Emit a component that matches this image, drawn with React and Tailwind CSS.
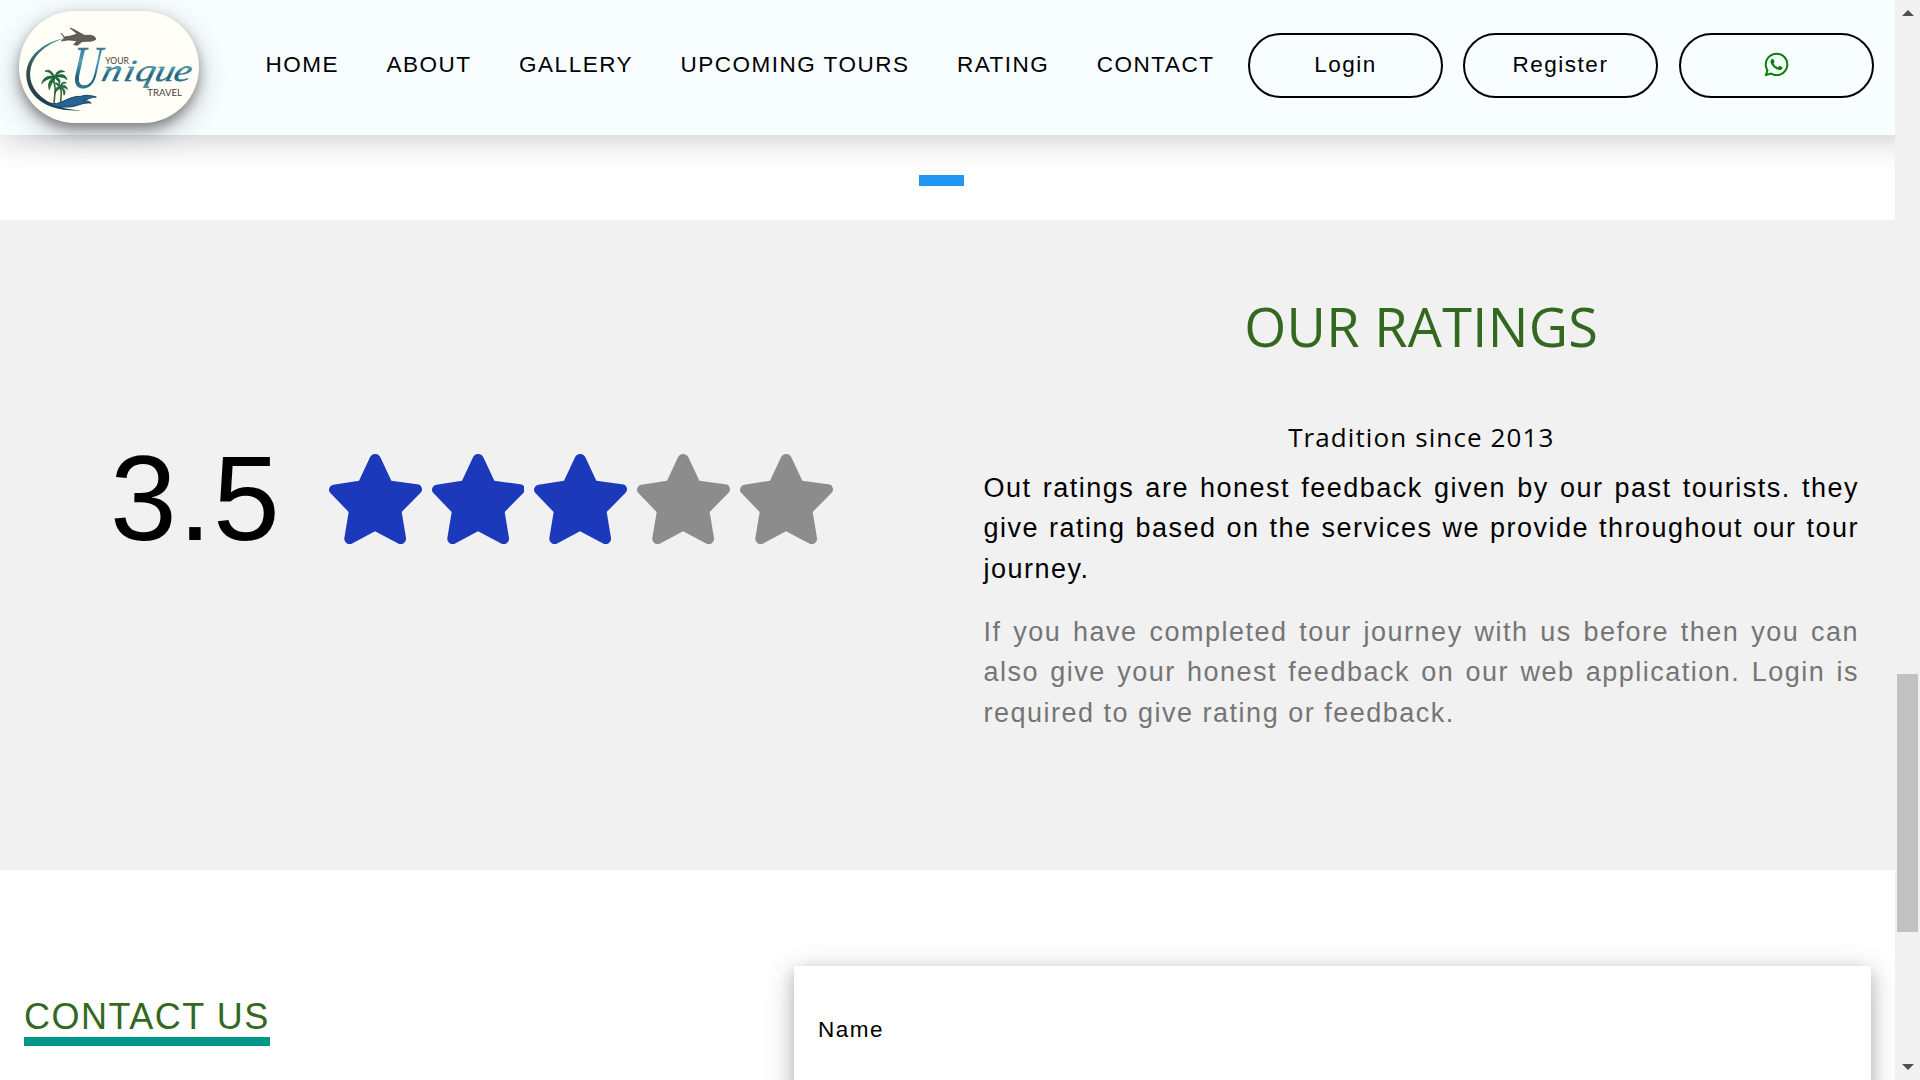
import React from "react";
import { FaWhatsapp } from "react-icons/fa";

const links = ["HOME", "ABOUT", "GALLERY", "UPCOMING TOURS", "RATING", "CONTACT"];

function Logo() {
  return (
    <div className="ml-[19px] mt-[11px] h-[112px] w-[180px] shrink-0 rounded-[56px] bg-[#fffff8] shadow-[0_6px_12px_rgba(0,0,0,0.35),0_9px_30px_rgba(0,0,0,0.25)]">
      <svg viewBox="57 33 540 336" className="h-[112px] w-[180px]">
        <defs>
          <linearGradient id="teal" x1="0" y1="0" x2="0" y2="1">
            <stop offset="0" stopColor="#1f4f62" />
            <stop offset="0.4" stopColor="#4fa3bd" />
            <stop offset="0.65" stopColor="#1f5f7c" />
            <stop offset="1" stopColor="#4d9aa8" />
          </linearGradient>
          <linearGradient id="ring" x1="0" y1="0" x2="0" y2="1">
            <stop offset="0" stopColor="#3f8f92" />
            <stop offset="0.5" stopColor="#35474a" />
            <stop offset="1" stopColor="#173d50" />
          </linearGradient>
        </defs>
        <path d="M193 115C120 130 78 175 79 226C80 285 135 338 244 331C165 328 103 291 92 239C83 185 121 138 193 115Z" fill="url(#ring)" />
        <path d="M183 99L193 111L211 108L232 102L210 84L223 89L253 106L273 106Q286 109 288 117Q281 125 258 124L246 125L232 136L221 134L231 122L205 120L184 123L193 114Z" fill="#625d56" stroke="#44413d" strokeWidth="2" />
        <path d="M148 308C177 322 204 286 243 289C260 283 274 287 289 291C266 293 263 300 250 302C266 302 270 306 274 309C243 306 230 323 197 321C174 323 157 319 148 308Z" fill="#286491" stroke="#194769" strokeWidth="3" />
        <path d="M162 309L166 268L160 234M182 307L184 278L180 257" fill="none" stroke="#4b6b35" strokeWidth="5" />
        <path d="M164 229C152 207 143 209 135 214C149 214 153 223 160 229C139 225 128 238 125 251C139 236 149 236 160 233C144 243 144 257 148 269C152 252 160 245 166 235C175 244 178 246 177 254C184 242 178 236 170 231C183 230 193 231 201 239C197 222 181 222 170 226C176 217 184 215 194 215C179 207 169 215 164 229Z" fill="#15733a" stroke="#164b29" strokeWidth="2" />
        <path d="M181 258C174 247 169 248 164 250C170 253 174 257 177 261C166 261 166 269 165 280C170 271 176 267 181 265C192 270 190 279 192 286C198 276 195 269 187 263C193 262 198 264 202 269C201 258 194 254 185 258C188 251 193 249 199 249C190 243 184 248 181 258Z" fill="#1b7a3e" stroke="#164b29" strokeWidth="2" />
        <text transform="translate(210 265) skewX(-6) scale(0.66 1)" letterSpacing="0" fontFamily="'Liberation Serif', serif" fontStyle="italic" fontSize="184" fill="url(#teal)">U</text>
        <text transform="translate(301 243) skewX(-14) scale(1.2 0.94)" x="0 55 84 133 180" letterSpacing="0" fontFamily="'Liberation Serif', serif" fontStyle="italic" fontSize="98" fill="url(#teal)" stroke="#24657e" strokeWidth="1">nique</text>
        <text x="316" y="191" textLength="71" lengthAdjust="spacingAndGlyphs" letterSpacing="0" fontFamily="Lato, sans-serif" fontSize="29" fill="#4b3c36">YOUR</text>
        <text x="442" y="288" textLength="104" lengthAdjust="spacingAndGlyphs" letterSpacing="0" fontFamily="Lato, sans-serif" fontSize="28" fill="#4b3c36">TRAVEL</text>
      </svg>
    </div>
  );
}

function Star({ on }) {
  return (
    <svg viewBox="0 0 278 270" className={on ? "h-[90px] w-[92.7px] fill-[#1c39bb]" : "h-[90px] w-[92.7px] fill-[#8c8c8c]"}>
      <path d="M90 80L123 10A17 17 0 0 1 154 10L187 80L264 91A15 15 0 0 1 274 117L218 174L231 252A16 16 0 0 1 209 269L138 232L68 269A16 16 0 0 1 46 252L59 174L4 117A15 15 0 0 1 13 92Z" />
    </svg>
  );
}

function PillButton({ children }) {
  return (
    <button className="flex h-[65px] w-[195px] items-center justify-center rounded-full border-2 border-black pb-[1px]">
      {children}
    </button>
  );
}

export default function App() {
  return (
    <div className="flex h-[1080px] w-[1920px] overflow-hidden bg-white font-['Liberation_Sans',Arial,sans-serif] text-[22.5px] leading-[33.75px] tracking-[1.5px] text-black">
      <div className="flex w-[1895px] flex-col overflow-hidden">
        <header className="relative z-10 flex h-[135px] w-[1925px] shrink-0 bg-[#f8fdff] pr-[30px] shadow-[0_6px_30px_rgba(0,0,0,0.19)]">
          <Logo />
          <nav className="ml-[66.6px] mt-[48px] flex h-[34px] gap-[47.5px] whitespace-nowrap">
            {links.map((l) => (
              <a key={l}>{l}</a>
            ))}
          </nav>
          <div className="ml-auto mr-[21px] mt-[33px] flex">
            <PillButton>Login</PillButton>
            <div className="ml-[20px] mr-[21px] flex">
              <PillButton>Register</PillButton>
            </div>
            <PillButton>
              <FaWhatsapp className="mb-[2px] mr-[1px] size-[27px] text-[#008000]" />
            </PillButton>
          </div>
        </header>

        <div className="flex h-[85px] shrink-0 justify-center pt-[40px]">
          <div className="ml-[-12px] h-[11px] w-[45px] bg-[#2196f3]" />
        </div>

        <section className="flex h-[650px] shrink-0 bg-[#f1f1f1]">
          <div className="flex w-1/2 pl-[110px] pt-[234px]">
            <div className="mt-[-46px] h-[180px] text-[120px] leading-[180px]">3.5</div>
            <div className="ml-[47.6px] flex gap-[10.1px]">
              <Star on />
              <Star on />
              <Star on />
              <Star />
              <Star />
            </div>
          </div>
          <div className="w-1/2 px-[36px] pt-[66px]">
            <h2 className="text-center font-['Open_Sans',sans-serif] text-[54px] leading-[81px] tracking-[0.3px] text-[#33691e]">OUR RATINGS</h2>
            <h5 className="mt-[50px] text-center font-['Open_Sans',sans-serif] text-[26px] leading-[40px] tracking-[1.1px]">Tradition since 2013</h5>
            <p className="mt-[10.5px] text-justify text-[27px] leading-[40.5px]">
              Out ratings are honest feedback given by our past tourists. they give rating based on the services we provide throughout our tour journey.
            </p>
            <p className="mt-[22.5px] text-justify text-[27px] leading-[40.5px] text-[#757575]">
              If you have completed tour journey with us before then you can also give your honest feedback on our web application. Login is required to give rating or feedback.
            </p>
          </div>
        </section>

        <section className="flex h-[210px] shrink-0 justify-between px-[24px]">
          <div className="pt-[124px]">
            <h3 className="h-[52px] border-b-[9px] border-[#009688] text-[36px] leading-[46px] text-[#33691e]">CONTACT US</h3>
          </div>
          <div className="mt-[96px] h-[300px] w-[1077px] bg-white px-[24px] pt-[47px] shadow-[0_6px_15px_rgba(0,0,0,0.2),0_6px_30px_rgba(0,0,0,0.19)]">
            <label>Name</label>
          </div>
        </section>
      </div>

      <div className="flex h-[1080px] w-[25px] shrink-0 flex-col items-center bg-[#f1f1f1]">
        <svg viewBox="0 0 12 6" className="mt-[10px] h-[6px] w-[12px] shrink-0 fill-[#505050]">
          <path d="M6 0L12 6H0Z" />
        </svg>
        <div className="mt-[658px] h-[258px] w-[21px] shrink-0 bg-[#c1c1c1]" />
        <svg viewBox="0 0 12 6" className="mt-[132px] h-[6px] w-[12px] shrink-0 fill-[#505050]">
          <path d="M0 0H12L6 6Z" />
        </svg>
      </div>
    </div>
  );
}
